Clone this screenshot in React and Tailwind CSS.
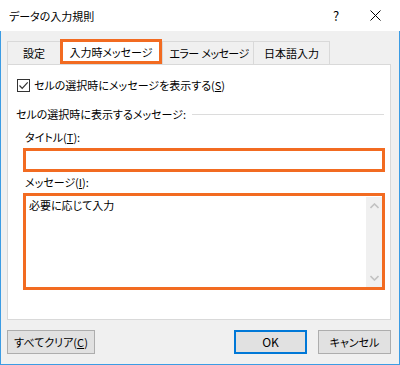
import React from "react";

const F = "font-['Noto_Sans_CJK_JP','Noto_Sans',sans-serif] [font-feature-settings:'palt']";

function Tab({ w, children, last, extra = "" }) {
  return (
    <div
      className={`h-[23px] ${w} flex items-center justify-center whitespace-nowrap border-t border-l border-[#d9d9d9] bg-[#f0f0f0] ${last ? "border-r" : ""} text-[11px] leading-[14px] text-black ${extra}`}
    >
      {children}
    </div>
  );
}

export default function App() {
  return (
    <div className={`w-[400px] h-[365px] flex flex-col ${F} text-black`}>
      {/* title bar */}
      <div className="h-[31px] bg-white flex items-center shrink-0">
        <div className="pl-[9px] text-[11px] leading-[14px] flex-1">データの入力規則</div>
        <div className="w-[20px] text-center text-[13px] leading-[14px] mr-[24px]">?</div>
        <div className="w-[12px] mr-[18px] flex items-center">
          <svg width="11" height="11" viewBox="0 0 11 11">
            <path d="M0.5 0.5 L10.5 10.5 M10.5 0.5 L0.5 10.5" stroke="#000" strokeWidth="1" />
          </svg>
        </div>
      </div>

      {/* body */}
      <div className="flex-1 bg-[#f0f0f0] border-x border-b border-[#3c9ce4] pl-[6px] pr-[8px] pt-[8px] flex flex-col">
        {/* tabs */}
        <div className="h-[25px] flex items-end">
          <Tab w="w-[53px]">設定</Tab>
          <div className="h-[25px] w-[102px] border-[3px] border-[#f26b21] bg-white flex items-center justify-center whitespace-nowrap text-[11px] leading-[14px]">
            入力時メッセージ
          </div>
          <Tab w="w-[91px]" extra="tracking-[-0.6px] pl-[2px]">
            <span>エラー</span>
            <span className="ml-[3px]">メッセージ</span>
          </Tab>
          <Tab w="w-[77px]" last>日本語入力</Tab>
        </div>

        {/* panel */}
        <div className="h-[256px] border border-[#d9d9d9] bg-white flex flex-col text-[11px] leading-[14px]">
          <div className="mt-[13px] ml-[9px] h-[14px] flex items-center">
            <div className="w-[13px] h-[13px] border border-[#333] flex items-center justify-center bg-white">
              <svg width="11" height="11" viewBox="0 0 11 11">
                <path d="M1.5 5.5 L4.2 8.3 L9.7 2.3" fill="none" stroke="#333" strokeWidth="1.2" />
              </svg>
            </div>
            <span className="ml-[4px]">
              セルの選択時にメッセージを表示する(<span className="underline">S</span>)
            </span>
          </div>

          <div className="mt-[15px] ml-[8px] mr-[6px] h-[14px] flex items-center">
            <span>セルの選択時に表示するメッセージ:</span>
            <div className="flex-1 h-px bg-[#dcdcdc] ml-[6px]" />
          </div>

          <div className="mt-[9px] ml-[17px] h-[14px]">
            タイトル(<span className="underline">T</span>):
          </div>

          <div className="mt-[4px] ml-[15px] w-[362px] h-[24px] border-[3px] border-[#f26b21] bg-white" />

          <div className="mt-[3px] ml-[17px] h-[14px]">
            メッセージ(<span className="underline">I</span>):
          </div>

          <div className="mt-[4px] ml-[15px] w-[362px] h-[97px] border-[3px] border-[#f26b21] bg-white flex">
            <div className="flex-1 pl-[3px] pt-[2px]">必要に応じて入力</div>
            <div className="w-[16px] mt-[1px] bg-[#f0f0f0] flex flex-col items-center justify-between py-[6px]">
              <svg width="9" height="6" viewBox="0 0 9 6">
                <path d="M0.5 5 L4.5 1 L8.5 5" fill="none" stroke="#c2c2c2" strokeWidth="1.6" />
              </svg>
              <svg width="9" height="6" viewBox="0 0 9 6">
                <path d="M0.5 1 L4.5 5 L8.5 1" fill="none" stroke="#c2c2c2" strokeWidth="1.6" />
              </svg>
            </div>
          </div>
        </div>

        {/* buttons */}
        <div className="mt-[10px] h-[24px] flex text-[11px] leading-[14px]">
          <div className="w-[88px] h-[24px] border border-[#adadad] bg-[#e1e1e1] flex items-center justify-center whitespace-nowrap">
            すべてクリア(<span className="underline">C</span>)
          </div>
          <div className="flex-1" />
          <div className="w-[73px] h-[24px] border-2 border-[#0078d7] bg-[#e1e1e1] flex items-center justify-center text-[12px]">
            OK
          </div>
          <div className="w-[73px] h-[24px] ml-[11px] border border-[#adadad] bg-[#e1e1e1] flex items-center justify-center">
            キャンセル
          </div>
        </div>
      </div>
    </div>
  );
}
